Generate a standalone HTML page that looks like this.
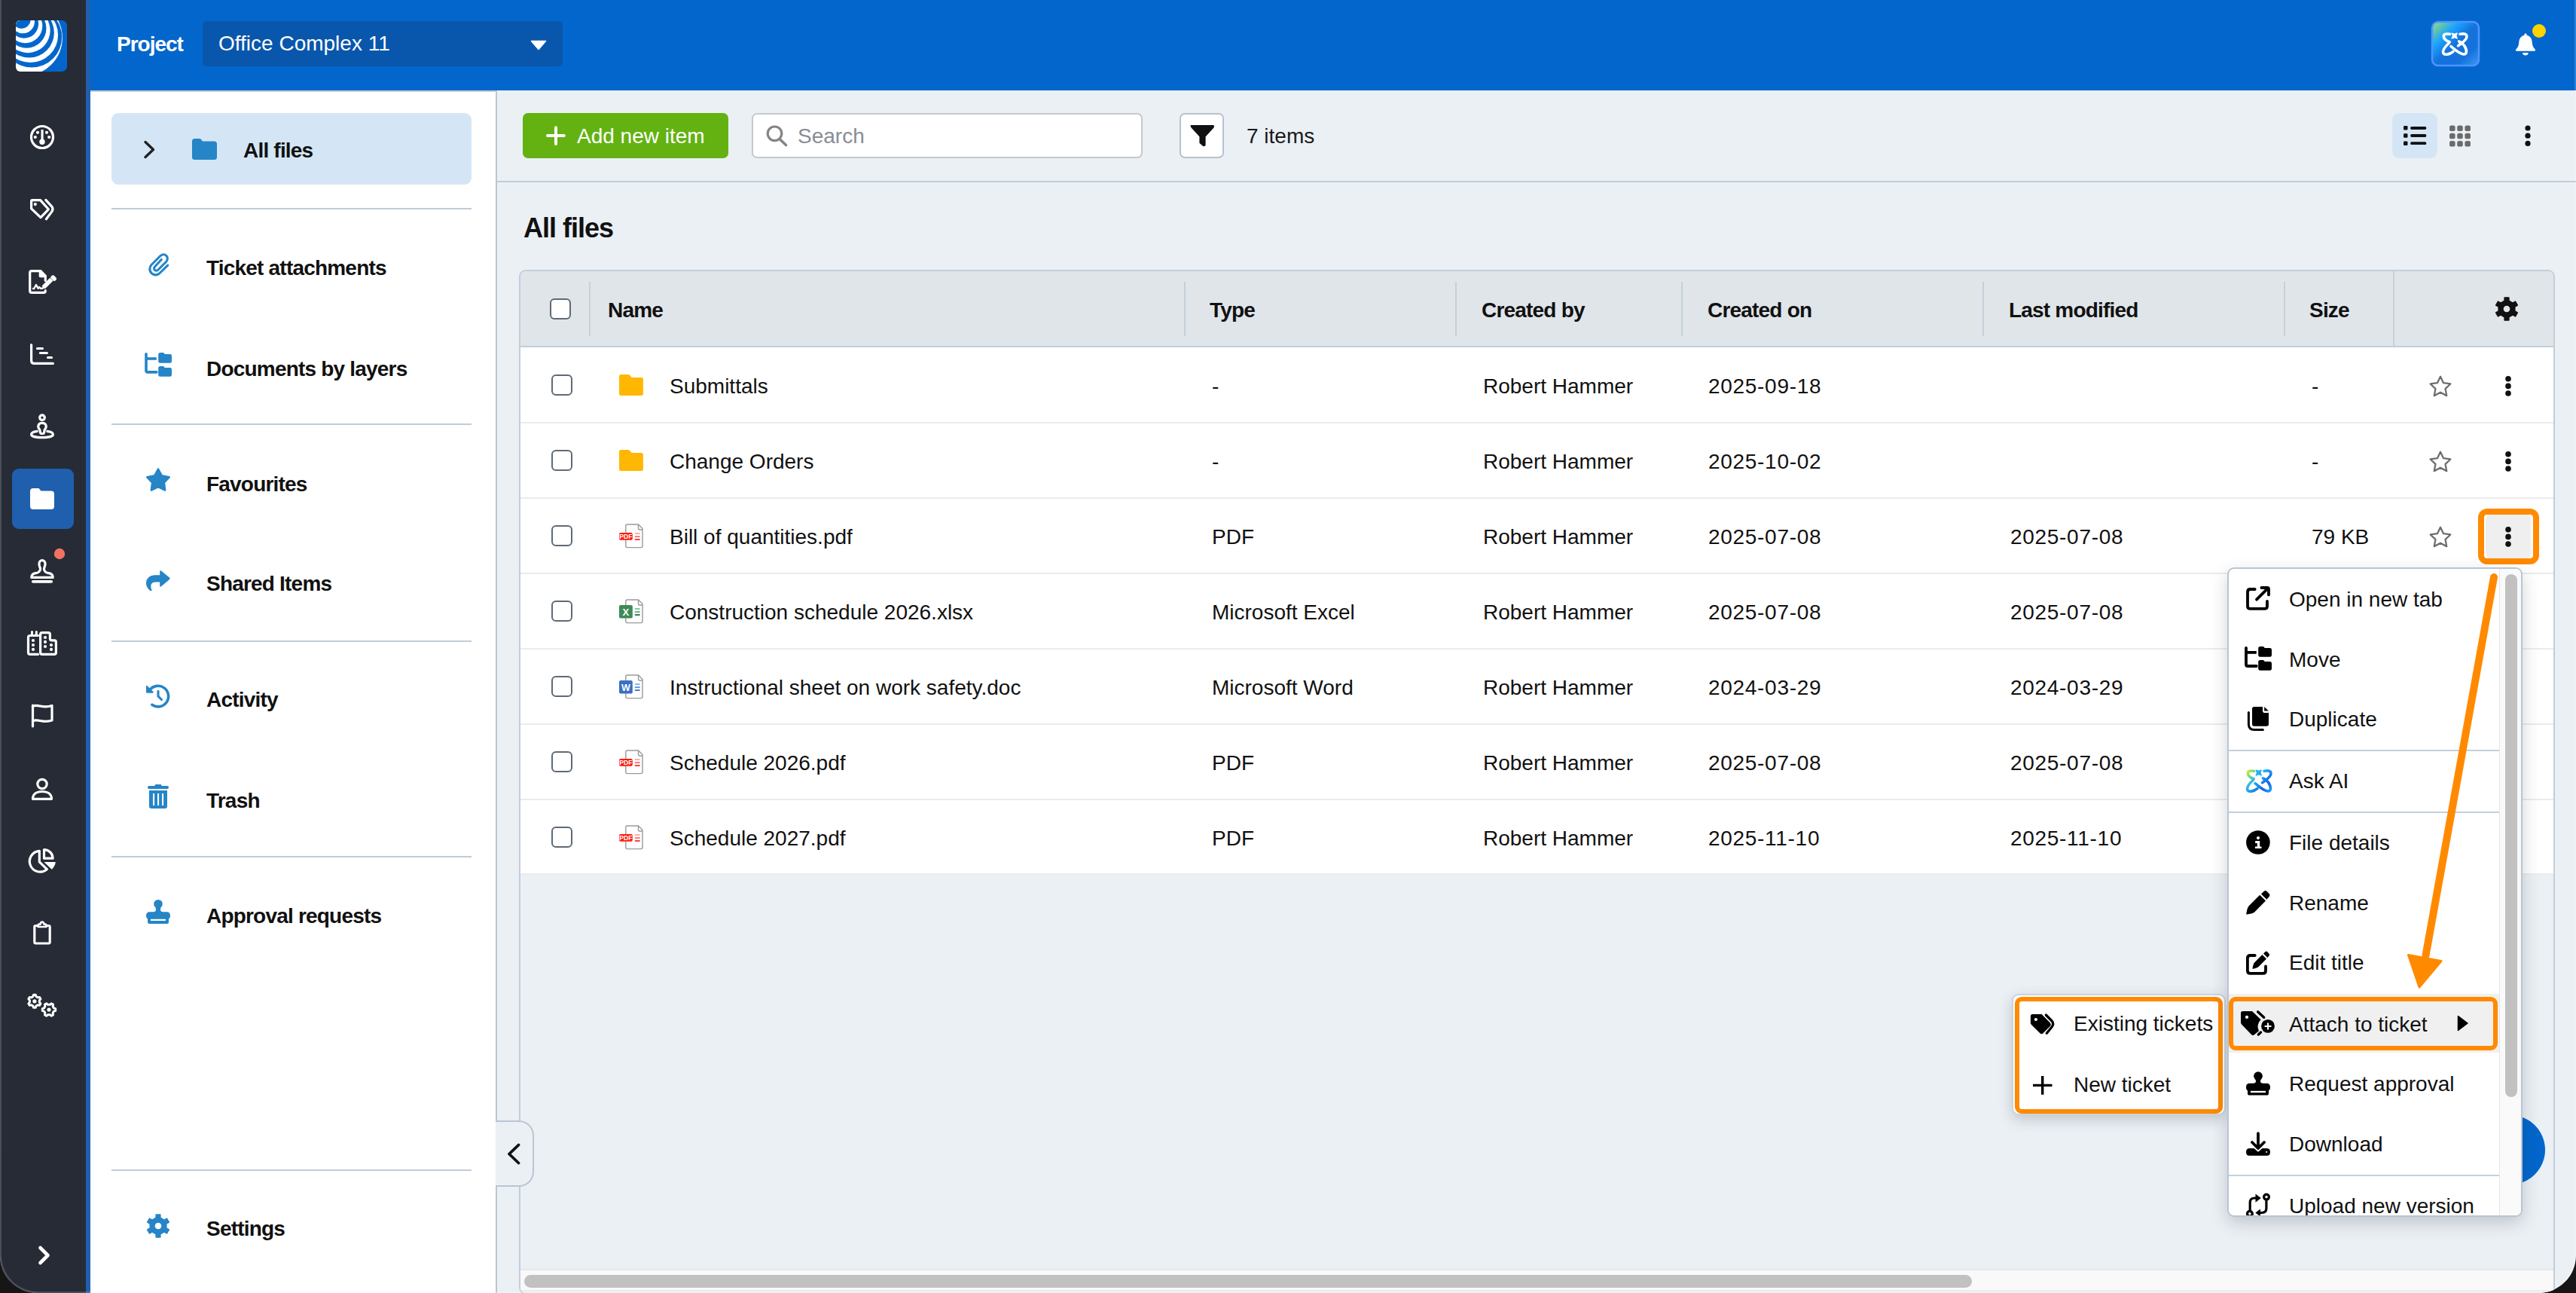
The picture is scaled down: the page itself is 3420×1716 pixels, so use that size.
<!DOCTYPE html>
<html><head><meta charset="utf-8">
<style>
*{box-sizing:border-box;margin:0;padding:0}
html,body{width:3420px;height:1716px;overflow:hidden;background:#161616}
body{font-family:"Liberation Sans",sans-serif;color:#111}
.win{position:absolute;left:0;top:0;width:3420px;height:1716px;border-radius:0 0 50px 50px;overflow:hidden;background:#ebf0f5}
.a{position:absolute}
.t28{position:absolute;font-size:28px;line-height:32px;white-space:nowrap}
.b{font-weight:bold;letter-spacing:-0.8px}
svg{position:absolute;overflow:visible}
.cb{position:absolute;width:28px;height:28px;border:2px solid #5e6a78;border-radius:6px;background:#fff}
</style></head>
<body>
<svg width="0" height="0" style="position:absolute">
 <defs>
  <g id="ic-folder"><path d="M12 13.5 Q12 11 14.5 11 H25 L28.8 15 H41.4 Q43.9 15 43.9 17.5 V36.4 Q43.9 38.9 41.4 38.9 H14.5 Q12 38.9 12 36.4 Z" fill="#ffb703"/></g>
  <g id="ic-page"><path d="M37.5 10 H22.8 Q20.8 10 20.8 12 V38.6 Q20.8 40.6 22.8 40.6 H41 Q43 40.6 43 38.6 V15.5 Z" fill="#fff" stroke="#9a9a9a" stroke-width="1.4" stroke-linejoin="round"/><path d="M37.5 10 V15.2 Q37.5 17 39.3 17 H43" fill="none" stroke="#9a9a9a" stroke-width="1.4"/></g>
  <g id="ic-pdf"><use href="#ic-page"/><rect x="12" y="21.1" width="17.8" height="9.6" rx="2" fill="#ff1a0a"/><text x="20.9" y="29.2" font-family="Liberation Sans" font-weight="bold" font-size="8.6" fill="#fff" text-anchor="middle">PDF</text><path d="M32.9 22 H39.6" stroke="#ff9a9a" stroke-width="1.6"/><path d="M32.9 26.1 H39.6" stroke="#ff5a5a" stroke-width="1.6"/><path d="M32.9 30 H39.6" stroke="#ff1010" stroke-width="1.6"/></g>
  <g id="ic-xls"><use href="#ic-page"/><rect x="12" y="17" width="17.8" height="17.6" rx="2" fill="#3d8b58"/><text x="20.9" y="30.6" font-family="Liberation Sans" font-weight="bold" font-size="13" fill="#fff" text-anchor="middle">X</text><path d="M32.9 22 H39.6" stroke="#5cc08a" stroke-width="1.6"/><path d="M32.9 26.1 H39.6" stroke="#3fa46a" stroke-width="1.6"/><path d="M32.9 30 H39.6" stroke="#1f4d2f" stroke-width="1.6"/></g>
  <g id="ic-doc"><use href="#ic-page"/><rect x="12" y="17" width="17.8" height="17.6" rx="2" fill="#3b6fc4"/><text x="20.9" y="30.6" font-family="Liberation Sans" font-weight="bold" font-size="12.5" fill="#fff" text-anchor="middle">W</text><path d="M32.9 22 H39.6" stroke="#62b2ee" stroke-width="1.6"/><path d="M32.9 26.1 H39.6" stroke="#3f86d6" stroke-width="1.6"/><path d="M32.9 30 H39.6" stroke="#2557c0" stroke-width="1.6"/></g>
  <g id="ic-rowact"><path d="M40.00 13.80 L44.06 22.22 L53.31 23.47 L46.56 29.93 L48.23 39.13 L40.00 34.70 L31.77 39.13 L33.44 29.93 L26.69 23.47 L35.94 22.22 Z" fill="none" stroke="#6e6e6e" stroke-width="2.3" stroke-linejoin="round"/><circle cx="130" cy="16.8" r="3.8" fill="#111"/><circle cx="130" cy="26.4" r="3.8" fill="#111"/><circle cx="130" cy="36" r="3.8" fill="#111"/></g>
 </defs>
</svg>
<div class="win">
  <!-- sidebar -->
  <div class="a" style="left:0;top:0;width:114px;height:1716px;background:#262b36"></div>
  
  <div class="a" style="left:114px;top:0;width:6px;height:1716px;background:#1f5fae"></div>
  <div class="a" style="left:16px;top:622px;width:82px;height:80px;border-radius:9px;background:#1f5fae"></div>
  <svg style="left:0;top:0" width="120" height="1716" viewBox="0 0 120 1716">
   <!-- logo -->
   <defs><clipPath id="lg"><rect x="21" y="27" width="68" height="68" rx="6"/></clipPath></defs>
   <rect x="21" y="27" width="68" height="68" rx="7" fill="#0366cc"/>
   <g clip-path="url(#lg)"><circle cx="32.50" cy="50.20" r="50.40" fill="#fff"/><circle cx="42.10" cy="49.34" r="40.14" fill="#0366cc"/><circle cx="40.41" cy="46.39" r="36.64" fill="#fff"/><circle cx="38.72" cy="43.44" r="33.14" fill="#0366cc"/><circle cx="37.03" cy="40.49" r="29.64" fill="#fff"/><circle cx="35.34" cy="37.54" r="26.14" fill="#0366cc"/><circle cx="33.65" cy="34.59" r="22.64" fill="#fff"/><circle cx="31.96" cy="31.64" r="19.14" fill="#0366cc"/><circle cx="30.27" cy="28.69" r="15.64" fill="#fff"/><circle cx="28.58" cy="25.74" r="12.14" fill="#0366cc"/></g>
   <g fill="none" stroke="#fff" stroke-width="3.2" stroke-linecap="round" stroke-linejoin="round">
    <!-- gauge -->
    <circle cx="56" cy="182" r="14.5"/>
    <!-- tags -->
    <g transform="translate(32,254)">
     <path d="M9.6 13 Q9.6 11.6 11 11.6 H21.6 L32.4 23.8 L22 34.6 L9.6 22.8 Z"/>
     <path d="M28.8 11.4 L37 20.4 Q39 23.5 37 26.6 L29.4 36.8"/>
    </g>
    <!-- signature doc -->
    <g transform="translate(32,350)">
     <path d="M21 9.6 H10 Q7.7 9.6 7.7 12 V36 Q7.7 38.3 10 38.3 H26 Q28.3 38.3 28.3 36 V35.5"/>
     <path d="M28.3 18 V22.5" />
     <path d="M12 33 L13.2 33 L16 28 L18.6 32.8 L20.2 31 L22 32.8 L24.5 32.8" stroke-width="2.4"/>
     <path d="M25.8 31.2 L36.3 20.7" stroke-width="5.8" stroke-linecap="butt"/>
     <path d="M38.3 18.3 L40 20" stroke-width="5.8"/>
    </g>
    <!-- gantt -->
    <g transform="translate(32,446)">
     <path d="M9.6 11.5 V32.5 Q9.6 36.4 13.5 36.4 H38.4"/>
     <path d="M17.5 16.5 H24.5 M21.4 22.5 H30.4 M31.5 28.5 H36.5"/>
    </g>
    <!-- person pin -->
    <g transform="translate(32,542)">
     <circle cx="24" cy="12.2" r="3.3"/>
     <path d="M24 19.4 C28 19.4 29.3 21.5 29.2 24.5 C29 26.5 27.8 27.8 27.2 28.5 L26.5 32.3 Q26.2 33.5 25 33.5 H23 Q21.8 33.5 21.5 32.3 L20.8 28.5 C20.2 27.8 19 26.5 18.8 24.5 C18.7 21.5 20 19.4 24 19.4 Z"/>
     <path d="M17.2 30.4 C12 31 9.6 32.6 9.6 34.7 C9.6 37 16 38.6 24 38.6 C32 38.6 38.4 37 38.4 34.7 C38.4 32.6 36 31 30.8 30.4"/>
    </g>
    <!-- stamp -->
    <g transform="translate(32,734)">
     <path d="M9.8 32.4 H38.2 Q38.2 27.5 33 26.6 L31 26.3 C28 25.6 26.3 23 26.5 20.5 C26.8 19 28 17.5 28 14.5 C28 11.5 26 9.6 24 9.6 C22 9.6 20 11.5 20 14.5 C20 17.5 21.2 19 21.5 20.5 C21.7 23 20 25.6 17 26.3 L15 26.6 Q9.8 27.5 9.8 32.4 Z"/>
     <path d="M11.8 37.8 H36.2" stroke-width="3.8"/>
    </g>
    <!-- buildings -->
    <g transform="translate(32,830)">
     <path d="M18.5 13.5 H8 Q5.5 13.5 5.5 16 V36 Q5.5 38.4 8 38.4 H18.5"/>
     <path d="M10.5 8.6 V13.5 M16.3 8.6 V13.5" stroke-width="3"/>
     <path d="M24 38.3 H40 Q42.4 38.3 42.4 36 V22.2 Q42.4 19.8 40 19.8 H36.8 Q34.4 19.8 34.4 17.4 V12 Q34.4 9.6 32 9.6 H24 Q21.6 9.6 21.6 12 V36 Q21.6 38.3 24 38.3 Z"/>
    </g>
    <!-- flag -->
    <path d="M43.5 936 V964"/>
    <path d="M43.5 937.5 C50 933.5 56 941 69 936.5 V956 C56 960.5 50 953 43.5 957"/>
    <!-- person -->
    <circle cx="56" cy="1040.5" r="6.2"/>
    <path d="M43.5 1060.3 C43.5 1053.5 49 1050.5 56 1050.5 C63 1050.5 68.5 1053.5 68.5 1060.3 Z"/>
    <!-- pie -->
    <g transform="translate(32,1118)">
     <path d="M20.3 11.3 A13.9 13.9 0 1 0 30.4 35.6 L20.3 25.8 Z"/>
     <path d="M26.5 21.2 V9.6 A11.6 11.6 0 0 1 38.1 21.2 Z"/>
    </g>
    <!-- clipboard -->
    <path d="M50 1228.5 H47.5 Q45.8 1228.5 45.8 1230.2 V1250.3 Q45.8 1252 47.5 1252 H64.5 Q66.2 1252 66.2 1250.3 V1230.2 Q66.2 1228.5 64.5 1228.5 H62"/>
    <path d="M50.5 1230 V1228.2 Q50.5 1226.6 52 1226.6 H53.6 Q54 1223.6 56 1223.6 Q58 1223.6 58.4 1226.6 H60 Q61.5 1226.6 61.5 1228.2 V1230 Z" stroke-width="2.6"/>
    <!-- gears -->
    <path stroke-width="3" d="M43.79 1322.54 L44.55 1320.31 L47.25 1320.31 L48.01 1322.54 L50.26 1323.85 L52.58 1323.39 L53.93 1325.72 L52.37 1327.50 L52.37 1330.10 L53.93 1331.88 L52.58 1334.21 L50.26 1333.75 L48.01 1335.06 L47.25 1337.29 L44.55 1337.29 L43.79 1335.06 L41.54 1333.75 L39.22 1334.21 L37.87 1331.88 L39.43 1330.10 L39.43 1327.50 L37.87 1325.72 L39.22 1323.39 L41.54 1323.85 Z"/>
    <path stroke-width="3" d="M71.44 1337.83 L73.69 1338.62 L73.69 1341.38 L71.44 1342.17 L70.10 1344.50 L70.54 1346.84 L68.15 1348.22 L66.34 1346.67 L63.66 1346.67 L61.85 1348.22 L59.46 1346.84 L59.90 1344.50 L58.56 1342.17 L56.31 1341.38 L56.31 1338.62 L58.56 1337.83 L59.90 1335.50 L59.46 1333.16 L61.85 1331.78 L63.66 1333.33 L66.34 1333.33 L68.15 1331.78 L70.54 1333.16 L70.10 1335.50 Z"/>
    <!-- chevron -->
    <path d="M53.5 1656 L63.5 1666 L53.5 1676" stroke-width="4.6"/>
   </g>
   <g fill="#fff">
    <rect x="54.5" y="172" width="3.1" height="16"/>
    <circle cx="56" cy="188.3" r="3.7"/>
    <circle cx="50" cy="175.8" r="2.1"/><circle cx="62" cy="175.8" r="2.1"/>
    <circle cx="46.8" cy="182" r="2.1"/><circle cx="65.2" cy="182" r="2.1"/>
    <circle cx="46.8" cy="271.1" r="2.1"/>
    <path transform="translate(32,350)" d="M19.7 8 H22.6 L29.9 15.4 V18.2 H21.5 Q19.7 18.2 19.7 16.4 Z"/>
    <path transform="translate(32,350)" d="M23.6 33.6 L24.6 29.2 L28 32.6 Z"/>
    <!-- building dots -->
    <g transform="translate(32,830)">
     <circle cx="12" cy="20" r="2.1"/><circle cx="12" cy="26" r="2.1"/><circle cx="12" cy="31.9" r="2.1"/>
     <circle cx="28" cy="16" r="2.1"/><circle cx="28" cy="21.9" r="2.1"/><circle cx="28" cy="28" r="2.1"/>
     <circle cx="36" cy="26" r="2.1"/><circle cx="36" cy="31.9" r="2.1"/>
    </g>
    <path transform="translate(32,1118)" d="M26.4 26 H41.8 A15.4 15.4 0 0 1 36.6 35.8 Z"/>
    <circle cx="45.9" cy="1328.8" r="2.6"/><circle cx="65" cy="1340" r="2.6"/>
    <!-- folder active -->
    <path d="M40 652 Q40 648 44 648 H51.5 L54.5 651.5 H68 Q72 651.5 72 655.5 V672 Q72 676 68 676 H44 Q40 676 40 672 Z"/>
   </g>
   <circle cx="79" cy="735" r="7.2" fill="#f07261"/>
  </svg>

  <!-- header -->
  <div class="a" style="left:120px;top:0;width:3300px;height:120px;background:#0366cc"></div>
  <div class="t28 b" style="left:155px;top:43px;color:#fff;letter-spacing:-1px">Project</div>
  <div class="a" style="left:269px;top:28px;width:478px;height:60px;border-radius:5px;background:#0957ac"></div>
  <div class="t28" style="left:290px;top:42px;color:#fff">Office Complex 11</div>
  <svg style="left:0;top:0" width="3420" height="120" viewBox="0 0 3420 120">
   <path d="M705.5 54.5 H724.5 L715 65.5 Z" fill="#fff" stroke="#fff" stroke-width="1.5" stroke-linejoin="round"/>
   <defs>
    <linearGradient id="aig" x1="0" y1="0" x2="1" y2="1">
     <stop offset="0" stop-color="#9be26f"/>
     <stop offset="0.3" stop-color="#1aa3ff"/>
     <stop offset="0.5" stop-color="#1572dc"/>
     <stop offset="0.75" stop-color="#1572dc"/>
     <stop offset="1" stop-color="#3b9cf5"/>
    </linearGradient>
   </defs>
   <rect x="3229" y="29" width="62" height="58" rx="8" fill="url(#aig)" stroke="#4d94ff" stroke-width="2.5"/>
   <g stroke="#fff" style="--sp:#fff">
   <g id="aiglyph" fill="none" stroke-width="3.6" stroke-linecap="round">
    <path d="M3252.5 45.3 C3248 44.8 3244.5 44.5 3244.3 48 C3244.2 51 3247.5 54 3252.2 55.7"/>
    <path d="M3251.5 57 C3246 62 3242.5 67 3243.8 70.5 C3245.5 73.5 3252 72.5 3257 68.3"/>
    <path d="M3254 61.6 C3259 65.5 3265 71.5 3270.5 72 C3275.5 72.3 3275.5 67 3272 61 C3270.5 58.8 3268.5 57 3267 55.8"/>
    <path d="M3266 45.3 C3270 44.5 3274.5 44.5 3275 48 C3275.5 51 3272 55 3263.6 60.7"/>
    <path d="M3264.5 54.8 L3268 57.8"/>
    <path transform="rotate(45 3258.7 47.5)" d="M3258.7 42.8 L3260.1 46.1 L3263.4 47.5 L3260.1 48.9 L3258.7 52.2 L3257.3 48.9 L3254 47.5 L3257.3 46.1 Z" stroke-width="1.6" stroke-linejoin="round" style="fill:var(--sp);stroke:var(--sp)"/>
   </g>
   </g>
   <!-- bell -->
   <path transform="translate(3330,28)" d="M23 16.3 Q24.6 16.3 24.6 18.5 Q31.5 20.5 31.8 28.5 Q32 34 35.8 37.5 Q36.5 39.8 34.5 39.8 H11.5 Q9.5 39.8 10.2 37.5 Q14 34 14.2 28.5 Q14.5 20.5 21.4 18.5 Q21.4 16.3 23 16.3 Z M19 42 H26.8 Q26.3 45.6 22.9 45.6 Q19.5 45.6 19 42 Z" fill="#fff"/>
   <circle cx="3371" cy="41" r="9" fill="#ffd400"/>
  </svg>
  

  <!-- left panel -->
  <div class="a" style="left:120px;top:120px;width:540px;height:1596px;background:#fff;border-top:2px solid #c8ced4;border-right:2px solid #bac6d2"></div>
  <div class="a" style="left:148px;top:150px;width:478px;height:95px;border-radius:9px;background:#d4e6f5"></div>
  <div class="a" style="left:148px;top:276px;width:478px;height:2px;background:#bfccd9"></div>
  <div class="a" style="left:148px;top:562px;width:478px;height:2px;background:#bfccd9"></div>
  <div class="a" style="left:148px;top:850px;width:478px;height:2px;background:#bfccd9"></div>
  <div class="a" style="left:148px;top:1136px;width:478px;height:2px;background:#bfccd9"></div>
  <div class="a" style="left:148px;top:1552px;width:478px;height:2px;background:#bfccd9"></div>
  <div class="t28 b" style="left:323px;top:184px">All files</div>
  <div class="t28 b" style="left:274px;top:340px">Ticket attachments</div>
  <div class="t28 b" style="left:274px;top:474px">Documents by layers</div>
  <div class="t28 b" style="left:274px;top:627px">Favourites</div>
  <div class="t28 b" style="left:274px;top:759px">Shared Items</div>
  <div class="t28 b" style="left:274px;top:913px">Activity</div>
  <div class="t28 b" style="left:274px;top:1047px">Trash</div>
  <div class="t28 b" style="left:274px;top:1200px">Approval requests</div>
  <div class="t28 b" style="left:274px;top:1615px">Settings</div>
  <svg style="left:0;top:0" width="720" height="1716" viewBox="0 0 720 1716">
   <path d="M193 188.5 L203.5 198.5 L193 208.5" fill="none" stroke="#222" stroke-width="3.4" stroke-linecap="round" stroke-linejoin="round"/>
   <g fill="#2585c7">
    <path d="M255 187.5 Q255 184 258.5 184 H266 L269 187.5 H284.5 Q288 187.5 288 191 V208.5 Q288 212 284.5 212 H258.5 Q255 212 255 208.5 Z"/>
    <!-- docs by layers folders -->
    <g transform="translate(180,454)">
     <path d="M30.2 16.5 Q30.2 14 32.7 14 H37 L38.8 16 H45.8 Q48 16 48 18.2 V25.6 Q48 27.8 45.8 27.8 H32.4 Q30.2 27.8 30.2 25.6 Z"/>
     <path d="M30.2 34.5 Q30.2 32 32.7 32 H37 L38.8 34 H45.8 Q48 34 48 36.2 V43.5 Q48 45.7 45.8 45.7 H32.4 Q30.2 45.7 30.2 43.5 Z"/>
    </g>
    <path d="M210.00 622.50 L214.82 631.37 L224.74 633.21 L217.80 640.53 L219.11 650.54 L210.00 646.20 L200.89 650.54 L202.20 640.53 L195.26 633.21 L205.18 631.37 Z" stroke="#2585c7" stroke-width="2.6" stroke-linejoin="round"/>
    <path transform="translate(180,742)" d="M32.2 21.3 V16.2 Q32.2 14.6 34 15.5 L45 24.6 Q46 25.8 45 27 L34 36.2 Q32.2 37.5 32.2 35.6 V30.6 H26 Q20.3 31 20.3 36 Q20.3 39.5 21.6 41.2 Q21 43 19.5 42 Q14 37.5 14 32 Q14.5 22 25 21.3 Z"/>
    <path transform="translate(180,894)" d="M14 16.8 Q14 15.2 15.5 16.3 L23.5 24 Q24.3 25.7 22.6 25.7 H15.5 Q14 25.7 14 24.2 Z"/>
    <!-- trash -->
    <g transform="translate(180,1027)">
     <rect x="16" y="16" width="28" height="4" rx="2"/>
     <path d="M25 16.5 L26.3 14 H33.7 L35 16.5 Z"/>
     <path d="M18 22 H42 V43 Q42 46 39 46 H21 Q18 46 18 43 Z"/>
    </g>
    <!-- approval stamp -->
    <g transform="translate(180,1180)">
     <circle cx="30" cy="19.7" r="5.8"/>
     <path d="M26.5 23 H33.5 L33 28 Q33.5 30.2 36.5 30.2 H42 Q46 30.5 46 35.5 Q46 38.8 44 39.5 V43.5 Q44 46 41.5 46 H18.5 Q16 46 16 43.5 V39.5 Q14 38.8 14 35.5 Q14 30.5 18 30.2 H23.5 Q26.5 30.2 27 28 Z"/>
    </g>
    <path fill-rule="evenodd" d="M207.10 1616.18 L207.15 1612.07 L212.85 1612.07 L212.90 1616.18 L217.92 1619.08 L221.51 1617.07 L224.35 1622.00 L220.82 1624.10 L220.82 1629.90 L224.35 1632.00 L221.51 1636.93 L217.92 1634.92 L212.90 1637.82 L212.85 1641.93 L207.15 1641.93 L207.10 1637.82 L202.08 1634.92 L198.49 1636.93 L195.65 1632.00 L199.18 1629.90 L199.18 1624.10 L195.65 1622.00 L198.49 1617.07 L202.08 1619.08 Z M215.1 1627 A5.1 5.1 0 1 0 204.9 1627 A5.1 5.1 0 1 0 215.1 1627 Z" stroke="#2585c7" stroke-width="1.5" stroke-linejoin="round"/>
   </g>
   <g fill="none" stroke="#2585c7" stroke-linecap="round" stroke-linejoin="round">
    <path transform="translate(180,320)" stroke-width="3.1" d="M42.7 32.2 L31.5 43 Q26.5 47 21 42.5 Q17 37.5 20.5 32 L33 19.5 Q37.5 16 41 19.5 Q44 23.5 40.5 27.5 L29.5 38.5 Q27 40 25 38 Q24 36 25.5 34 L34.3 24.5"/>
    <g transform="translate(180,454)" stroke-width="3.6">
     <path d="M14 15.8 V38 Q14 39.9 16 39.9 H27.8"/>
     <path d="M14 22 H27.8" stroke-linecap="butt"/>
    </g>
    <g transform="translate(180,894)" stroke-width="3.6">
     <path d="M19 21.5 A13.8 13.8 0 1 1 21.8 41.3"/>
     <path d="M30 23.2 V30 L34.5 34.5" stroke-width="3.1"/>
    </g>
   </g>
   <g fill="#fff">
    <g transform="translate(180,1027)"><rect x="23" y="26" width="2.1" height="16"/><rect x="29" y="26" width="2.1" height="16"/><rect x="35" y="26" width="2.1" height="16"/></g>
    <rect x="200" y="1219.8" width="20" height="2.2"/>
   </g>
  </svg>


  <!-- main -->
  <div class="a" style="left:660px;top:240px;width:2760px;height:2px;background:#bfccd9"></div>
  <div class="a" style="left:694px;top:150px;width:273px;height:60px;border-radius:7px;background:#63b212"></div>
  <div class="t28" style="left:766px;top:165px;color:#fff">Add new item</div>
  <div class="a" style="left:998px;top:150px;width:519px;height:60px;border-radius:7px;background:#fff;border:2px solid #c5c9ce"></div>
  <div class="t28" style="left:1059px;top:165px;color:#878d94">Search</div>
  <div class="a" style="left:1566px;top:150px;width:59px;height:60px;border-radius:7px;background:#fff;border:2px solid #b6c2ce"></div>
  <div class="t28" style="left:1655px;top:165px;color:#1a1a1a">7 items</div>
  <div class="a" style="left:3176px;top:150px;width:60px;height:60px;border-radius:9px;background:#d4e6f5"></div>
  <div class="a" style="left:695px;top:283px;font-size:36px;line-height:40px;font-weight:bold;letter-spacing:-1px;white-space:nowrap">All files</div>
  <svg style="left:0;top:0" width="3420" height="260" viewBox="0 0 3420 260">
   <path d="M738 169.2 V191 M727 180 H748.8" stroke="#fff" stroke-width="4" stroke-linecap="round"/>
   <circle cx="1028.5" cy="177.3" r="9.3" fill="none" stroke="#858585" stroke-width="3.2"/>
   <path d="M1035.5 185 L1043.5 192.5" stroke="#858585" stroke-width="3.6" stroke-linecap="round"/>
   <path d="M1581.5 166.5 H1610.5 Q1612 167 1611 169 L1600 181 V192.5 Q1599 194.5 1597 193 L1593 189.5 V181 L1582 169 Q1580.5 167 1581.5 166.5 Z" fill="#111" stroke="#111" stroke-width="1.2" stroke-linejoin="round"/>
   <g fill="#111">
    <rect x="3191" y="167" width="5.5" height="5.5" rx="1.2"/><rect x="3191" y="177.2" width="5.5" height="5.5" rx="1.2"/><rect x="3191" y="187.5" width="5.5" height="5.5" rx="1.2"/>
   </g>
   <path d="M3202 170 H3219.5 M3202 180 H3219.5 M3202 190.2 H3219.5" stroke="#111" stroke-width="3.8" stroke-linecap="round"/>
   <g fill="#6b6b6b">
    <rect x="3252" y="166.5" width="7.6" height="7.6" rx="2.6"/><rect x="3262.2" y="166.5" width="7.6" height="7.6" rx="2.6"/><rect x="3272.4" y="166.5" width="7.6" height="7.6" rx="2.6"/>
    <rect x="3252" y="176.7" width="7.6" height="7.6" rx="2.6"/><rect x="3262.2" y="176.7" width="7.6" height="7.6" rx="2.6"/><rect x="3272.4" y="176.7" width="7.6" height="7.6" rx="2.6"/>
    <rect x="3252" y="186.9" width="7.6" height="7.6" rx="2.6"/><rect x="3262.2" y="186.9" width="7.6" height="7.6" rx="2.6"/><rect x="3272.4" y="186.9" width="7.6" height="7.6" rx="2.6"/>
   </g>
   <g fill="#111"><circle cx="3356" cy="170" r="3.6"/><circle cx="3356" cy="180.2" r="3.6"/><circle cx="3356" cy="190.4" r="3.6"/></g>
  </svg>
<div class="a" style="left:689px;top:358px;width:2703px;height:1360px;border:2px solid #c2ceda;border-radius:9px;background:#ebf0f5;overflow:hidden">
 <div class="a" style="left:0;top:0;width:2699px;height:101px;background:#e0e5ea;border-bottom:2px solid #c2ceda"></div>
 <div class="a" style="left:0;top:101px;width:2699px;height:700px;background:#fff"></div>
 <div class="a" style="left:0;top:799px;width:2699px;height:2px;background:#ebebeb"></div>
 <div class="a" style="left:0;top:200px;width:2699px;height:2px;background:#ebebeb"></div>
 <div class="a" style="left:0;top:300px;width:2699px;height:2px;background:#ebebeb"></div>
 <div class="a" style="left:0;top:400px;width:2699px;height:2px;background:#ebebeb"></div>
 <div class="a" style="left:0;top:500px;width:2699px;height:2px;background:#ebebeb"></div>
 <div class="a" style="left:0;top:600px;width:2699px;height:2px;background:#ebebeb"></div>
 <div class="a" style="left:0;top:700px;width:2699px;height:2px;background:#ebebeb"></div>
 <div class="a" style="left:0;top:1324px;width:2699px;height:30px;background:#f9f9f9;border-top:2px solid #e6e6e6;border-bottom:2px solid #ececec"></div>
 <div class="a" style="left:5px;top:1332px;width:1922px;height:17px;border-radius:9px;background:#c1c1c1"></div>
 <div class="a" style="left:91px;top:14px;width:2px;height:72px;background:#c6d0da"></div>
 <div class="a" style="left:881px;top:14px;width:2px;height:72px;background:#c6d0da"></div>
 <div class="a" style="left:1241px;top:14px;width:2px;height:72px;background:#c6d0da"></div>
 <div class="a" style="left:1541px;top:14px;width:2px;height:72px;background:#c6d0da"></div>
 <div class="a" style="left:1941px;top:14px;width:2px;height:72px;background:#c6d0da"></div>
 <div class="a" style="left:2341px;top:14px;width:2px;height:72px;background:#c6d0da"></div>
 <div class="a" style="left:2486px;top:0;width:2px;height:101px;background:#c6d0da"></div>
</div>
<div class="a cb" style="left:730px;top:396px"></div>
<div class="t28 b" style="left:807px;top:396px">Name</div>
<div class="t28 b" style="left:1606px;top:396px">Type</div>
<div class="t28 b" style="left:1967px;top:396px">Created by</div>
<div class="t28 b" style="left:2267px;top:396px">Created on</div>
<div class="t28 b" style="left:2667px;top:396px">Last modified</div>
<div class="t28 b" style="left:3066px;top:396px">Size</div>
<div class="a cb" style="left:732px;top:497px"></div>
<svg style="left:810px;top:486px" width="56" height="50" viewBox="0 0 56 50"><use href="#ic-folder"/></svg>
<div class="t28" style="left:889px;top:497px">Submittals</div>
<div class="t28" style="left:1609px;top:497px">-</div>
<div class="t28" style="left:1969px;top:497px">Robert Hammer</div>
<div class="t28" style="left:2268px;top:497px;letter-spacing:0.7px">2025-09-18</div>
<div class="t28" style="left:3069px;top:497px">-</div>
<svg style="left:3200px;top:486px" width="160" height="50" viewBox="0 0 160 50"><use href="#ic-rowact"/></svg>
<div class="a cb" style="left:732px;top:597px"></div>
<svg style="left:810px;top:586px" width="56" height="50" viewBox="0 0 56 50"><use href="#ic-folder"/></svg>
<div class="t28" style="left:889px;top:597px">Change Orders</div>
<div class="t28" style="left:1609px;top:597px">-</div>
<div class="t28" style="left:1969px;top:597px">Robert Hammer</div>
<div class="t28" style="left:2268px;top:597px;letter-spacing:0.7px">2025-10-02</div>
<div class="t28" style="left:3069px;top:597px">-</div>
<svg style="left:3200px;top:586px" width="160" height="50" viewBox="0 0 160 50"><use href="#ic-rowact"/></svg>
<div class="a cb" style="left:732px;top:697px"></div>
<svg style="left:810px;top:686px" width="56" height="50" viewBox="0 0 56 50"><use href="#ic-pdf"/></svg>
<div class="t28" style="left:889px;top:697px">Bill of quantities.pdf</div>
<div class="t28" style="left:1609px;top:697px">PDF</div>
<div class="t28" style="left:1969px;top:697px">Robert Hammer</div>
<div class="t28" style="left:2268px;top:697px;letter-spacing:0.7px">2025-07-08</div>
<div class="t28" style="left:2669px;top:697px;letter-spacing:0.7px">2025-07-08</div>
<div class="t28" style="left:3069px;top:697px">79 KB</div>
<svg style="left:3200px;top:686px" width="160" height="50" viewBox="0 0 160 50"><use href="#ic-rowact"/></svg>
<div class="a cb" style="left:732px;top:797px"></div>
<svg style="left:810px;top:786px" width="56" height="50" viewBox="0 0 56 50"><use href="#ic-xls"/></svg>
<div class="t28" style="left:889px;top:797px">Construction schedule 2026.xlsx</div>
<div class="t28" style="left:1609px;top:797px">Microsoft Excel</div>
<div class="t28" style="left:1969px;top:797px">Robert Hammer</div>
<div class="t28" style="left:2268px;top:797px;letter-spacing:0.7px">2025-07-08</div>
<div class="t28" style="left:2669px;top:797px;letter-spacing:0.7px">2025-07-08</div>
<div class="a cb" style="left:732px;top:897px"></div>
<svg style="left:810px;top:886px" width="56" height="50" viewBox="0 0 56 50"><use href="#ic-doc"/></svg>
<div class="t28" style="left:889px;top:897px">Instructional sheet on work safety.doc</div>
<div class="t28" style="left:1609px;top:897px">Microsoft Word</div>
<div class="t28" style="left:1969px;top:897px">Robert Hammer</div>
<div class="t28" style="left:2268px;top:897px;letter-spacing:0.7px">2024-03-29</div>
<div class="t28" style="left:2669px;top:897px;letter-spacing:0.7px">2024-03-29</div>
<div class="a cb" style="left:732px;top:997px"></div>
<svg style="left:810px;top:986px" width="56" height="50" viewBox="0 0 56 50"><use href="#ic-pdf"/></svg>
<div class="t28" style="left:889px;top:997px">Schedule 2026.pdf</div>
<div class="t28" style="left:1609px;top:997px">PDF</div>
<div class="t28" style="left:1969px;top:997px">Robert Hammer</div>
<div class="t28" style="left:2268px;top:997px;letter-spacing:0.7px">2025-07-08</div>
<div class="t28" style="left:2669px;top:997px;letter-spacing:0.7px">2025-07-08</div>
<div class="a cb" style="left:732px;top:1097px"></div>
<svg style="left:810px;top:1086px" width="56" height="50" viewBox="0 0 56 50"><use href="#ic-pdf"/></svg>
<div class="t28" style="left:889px;top:1097px">Schedule 2027.pdf</div>
<div class="t28" style="left:1609px;top:1097px">PDF</div>
<div class="t28" style="left:1969px;top:1097px">Robert Hammer</div>
<div class="t28" style="left:2268px;top:1097px;letter-spacing:0.7px">2025-11-10</div>
<div class="t28" style="left:2669px;top:1097px;letter-spacing:0.7px">2025-11-10</div>
<svg style="left:0;top:0" width="3420" height="500" viewBox="0 0 3420 500"><path fill="#111" fill-rule="evenodd" stroke="#111" stroke-width="1.5" stroke-linejoin="round" d="M3325.10 399.18 L3325.15 395.07 L3330.85 395.07 L3330.90 399.18 L3335.92 402.08 L3339.51 400.07 L3342.35 405.00 L3338.82 407.10 L3338.82 412.90 L3342.35 415.00 L3339.51 419.93 L3335.92 417.92 L3330.90 420.82 L3330.85 424.93 L3325.15 424.93 L3325.10 420.82 L3320.08 417.92 L3316.49 419.93 L3313.65 415.00 L3317.18 412.90 L3317.18 407.10 L3313.65 405.00 L3316.49 400.07 L3320.08 402.08 Z M3333.1 410 A5.1 5.1 0 1 0 3322.9 410 A5.1 5.1 0 1 0 3333.1 410 Z"/></svg>
  <!-- collapse tab -->
  <div class="a" style="left:658px;top:1487px;width:51px;height:88px;background:#ebf0f5;border:2px solid #bac6d2;border-left:none;border-radius:0 20px 20px 0"></div>
  <svg style="left:0;top:0" width="720" height="1716" viewBox="0 0 720 1716">
   <path d="M688.5 1519.5 L676 1531.5 L688.5 1543.5" fill="none" stroke="#111" stroke-width="3.8" stroke-linecap="round" stroke-linejoin="round"/>
  </svg>
  <!-- FAB -->
  <div class="a" style="left:3287px;top:1480px;width:92px;height:92px;border-radius:50%;background:#0366cc"></div>
  <!-- kebab highlight -->
  <div class="a" style="left:3300px;top:682px;width:60px;height:60px;border-radius:8px;background:#efefef"></div>
  <svg style="left:0;top:0" width="3420" height="800" viewBox="0 0 3420 800"><g fill="#111"><circle cx="3330" cy="702.8" r="3.8"/><circle cx="3330" cy="712.4" r="3.8"/><circle cx="3330" cy="722" r="3.8"/></g></svg>
  <div class="a" style="left:3290px;top:675px;width:81px;height:74px;border-radius:12px;border:8px solid #ff8a00"></div>
  <!-- submenu -->
  <div class="a" style="left:2671px;top:1319px;width:284px;height:161px;border-radius:9px;background:#fff;border:2px solid #c8d4e0;box-shadow:0 6px 18px rgba(40,50,60,.22)"></div>
  <div class="a" style="left:2675px;top:1323px;width:276px;height:155px;border-radius:9px;border:6.5px solid #ff8a00"></div>
  <div class="t28" style="left:2753px;top:1343px">Existing tickets</div>
  <div class="t28" style="left:2753px;top:1424px">New ticket</div>
  <!-- main menu -->
  <div class="a" style="left:2957px;top:753px;width:392px;height:862px;border-radius:9px;background:#fff;border:2px solid #b8c6d4;box-shadow:0 8px 22px rgba(40,50,60,.22);overflow:hidden">
   <div class="a" style="left:359px;top:0;width:31px;height:859px;background:#fafafa;border-left:1px solid #e6e6e6"></div>
   <div class="a" style="left:367px;top:7px;width:16px;height:694px;border-radius:8px;background:#c1c1c1"></div>
   <div class="a" style="left:0;top:564px;width:359px;height:78px;background:#f0f0f0"></div>
   <div class="a" style="left:0;top:239.5px;width:359px;height:2px;background:#c4d0dc"></div>
   <div class="a" style="left:0;top:321.5px;width:359px;height:2px;background:#c4d0dc"></div>
   <div class="a" style="left:0;top:803.5px;width:359px;height:2px;background:#c4d0dc"></div>
   <div class="t28" style="left:80px;top:25px">Open in new tab</div>
   <div class="t28" style="left:80px;top:105px">Move</div>
   <div class="t28" style="left:80px;top:184px">Duplicate</div>
   <div class="t28" style="left:80px;top:266px">Ask AI</div>
   <div class="t28" style="left:80px;top:348px">File details</div>
   <div class="t28" style="left:80px;top:428px">Rename</div>
   <div class="t28" style="left:80px;top:507px">Edit title</div>
   <div class="t28" style="left:80px;top:589px">Attach to ticket</div>
   <div class="t28" style="left:80px;top:668px">Request approval</div>
   <div class="t28" style="left:80px;top:748px">Download</div>
   <div class="t28" style="left:80px;top:830px">Upload new version</div>
   <svg style="left:-2959px;top:-755px" width="3420" height="1716" viewBox="0 0 3420 1716">
    <defs>
     <linearGradient id="aig2" gradientUnits="userSpaceOnUse" x1="3244" y1="44" x2="3276" y2="74">
      <stop offset="0" stop-color="#c8f22a"/><stop offset="0.38" stop-color="#22b2f2"/><stop offset="0.72" stop-color="#1464e4"/><stop offset="1" stop-color="#1eaaff"/>
     </linearGradient>
    </defs>
    <g fill="none" stroke="#000" stroke-width="3.8" stroke-linecap="round" stroke-linejoin="round">
     <g transform="translate(2970,766)"><path d="M23.7 16 H17.5 Q14 16 14 19.5 V38.4 Q14 41.9 17.5 41.9 H36.5 Q40 41.9 40 38.4 V32"/><path d="M26 29.7 L40 15.7 M32.4 14 H40.2 Q42 14 42 15.8 V23.4"/></g>
     <g transform="translate(2970,846)"><path d="M12 14 V36 Q12 38 14 38 H25.8"/><path d="M12 19.9 H25.8" stroke-linecap="butt"/></g>
     <g transform="translate(2970,926)"><path d="M15.4 19.4 V35 Q15.4 42.6 23 42.6 H34.4" stroke-width="3"/></g>
     <g transform="translate(2970,1248)"><path d="M23.7 20 H17.5 Q13.9 20 13.9 23.6 V40.3 Q13.9 43.9 17.5 43.9 H34.4 Q38 43.9 38 40.3 V34.3"/></g>
     <g transform="translate(2970,1490)"><path d="M28 14.2 V33 M20 26 L28 34 L36 26"/></g>
     <g transform="translate(2970,1570)" stroke-width="3.2"><circle cx="16.9" cy="40.7" r="3.4"/><circle cx="39" cy="18.6" r="3.4"/><path d="M17.2 37.2 V26 Q17.2 20 23.2 20 H26"/><path d="M38.9 22 V33.5 Q38.9 39.5 32.9 39.5 H30"/></g>
    </g>
    <g fill="#000">
     <g transform="translate(2970,846)"><path d="M28.2 14.5 Q28.2 12 30.7 12 H35 L36.8 14 H43.6 Q46 14 46 16.4 V23.4 Q46 25.8 43.6 25.8 H30.6 Q28.2 25.8 28.2 23.4 Z"/><path d="M28.2 32.5 Q28.2 30 30.7 30 H35 L36.8 32 H43.6 Q46 32 46 34.4 V41.4 Q46 43.8 43.6 43.8 H30.6 Q28.2 43.8 28.2 41.4 Z"/></g>
     <g transform="translate(2970,926)"><path d="M22.8 12 H34 V17.2 Q34 20 36.8 20 H42 V35 Q42 37.8 39.2 37.8 H22.8 Q20 37.8 20 35 V14.8 Q20 12 22.8 12 Z"/><path d="M36.2 12 L41.8 17.6 H36.2 Z"/></g>
     <g transform="translate(2970,1088)"><circle cx="27.9" cy="30" r="15.8"/></g>
     <g transform="translate(2970,1168)"><path d="M30.2 19.8 L38 27.4 L23.2 42.4 Q21 44.3 17.5 44.8 L13.3 45.6 Q12 45.8 12.3 44.5 L13.2 40 Q13.8 36.6 15.5 34.5 Z"/><path d="M32 18.4 L35.8 14.8 Q37.6 13.3 39.4 14.8 L42.8 18.2 Q44.3 20 42.8 21.8 L39.4 25.8 Z"/></g>
     <g transform="translate(2970,1248)"><path d="M33.4 19 L39 24.5 L28 35.6 Q26.5 36.5 24.5 37 L21.3 37.8 Q20.2 38 20.5 37 L21.2 34 Q21.6 31.5 22.6 30 Z"/><path d="M35 17.6 L37.6 15.1 Q38.8 14 40 15.1 L42.6 17.7 Q43.7 19 42.6 20.2 L40.4 23 Z"/></g>
     <g transform="translate(2966,1328)"><path d="M11.5 14 H24 L35.7 25.3 A12 12 0 0 0 33 40.3 L26.5 45.5 Q24.7 46.6 23 45 L10 31.5 Q9 30.3 9 28.5 V16.5 Q9 14 11.5 14 Z"/><path d="M31.6 14.8 L39.7 22.3" stroke="#000" stroke-width="3.4" stroke-linecap="round"/><path d="M32.3 45 L35.5 42" stroke="#000" stroke-width="3.4" stroke-linecap="round"/><circle cx="45" cy="33.9" r="8.9"/></g>
     <g transform="translate(2970,1410)"><circle cx="28" cy="18.1" r="5.9"/><path d="M24.5 21 H31.5 L31 25.7 Q31.5 27.8 34.5 27.8 H40 Q44 28 44 33 Q44 36.5 42 37.2 V41 Q42 43.6 39.4 43.6 H16.6 Q14 43.6 14 41 V37.2 Q12 36.5 12 33 Q12 28 16 27.8 H21.5 Q24.5 27.8 25 25.7 Z"/></g>
     <g transform="translate(2970,1490)"><path d="M16.5 34 H22.5 L28 38.8 L33.5 34 H39.5 Q44 34 44 38.9 Q44 43.8 39.5 43.8 H16.5 Q12 43.8 12 38.9 Q12 34 16.5 34 Z"/></g>
     <g transform="translate(2970,1570)"><path d="M24.5 14.5 L31.8 20 L24.5 25.8 Z"/><path d="M31 34.5 L24.3 39.6 L31 44.5 Z"/></g>
     <path d="M3263.5 1348.5 L3276 1358 L3263.5 1367.5 Z" stroke="#000" stroke-width="1.5" stroke-linejoin="round"/>
    </g>
    <g fill="#fff">
     <g transform="translate(2970,1088)"><circle cx="28" cy="24.1" r="2.1"/><path d="M24.6 28 H30.2 V35.6 H32 Q32.6 35.6 32.6 36.8 Q32.6 38 32 38 H24.4 Q23.8 38 23.8 36.8 Q23.8 35.6 24.4 35.6 H26.8 V31 H24.6 Q24 31 24 29.5 Q24 28 24.6 28 Z"/></g>
     <g transform="translate(2966,1328)"><circle cx="17" cy="21.9" r="2.1"/><path d="M45 29.5 V38.5 M40.6 34 H49.5" stroke="#fff" stroke-width="2.1"/></g>
     <g transform="translate(2970,1410)"><rect x="17.9" y="37.8" width="20.1" height="2.3"/></g>
     <g transform="translate(2970,1490)"><rect x="38.2" y="37.9" width="1.8" height="1.8" transform="rotate(20 39 38.8)"/></g>
    </g>
    <!-- ask ai -->
    <use href="#aiglyph" transform="translate(-260,978)" stroke="url(#aig2)" style="--sp:#22b0ee"/>
   </svg>
  </div>
  <div class="a" style="left:2959px;top:1323px;width:357px;height:71px;border-radius:9px;border:6px solid #ff8a00"></div>
  <!-- submenu icons -->
  <svg style="left:0;top:0" width="3420" height="1716" viewBox="0 0 3420 1716">
   <g transform="translate(2682,1330)">
    <path d="M16.5 16 H28.5 L40 27.4 Q41.6 29.7 40 31.8 L30.5 41.3 Q28.5 43.3 26.4 41.3 L15 30 Q13.9 28.8 13.9 27.2 V18.6 Q13.9 16 16.5 16 Z" fill="#000"/>
    <circle cx="20.9" cy="23" r="2.1" fill="#fff"/>
    <path d="M34.3 17 L42.2 25 Q45.2 28.8 42.2 32.8 L35.3 41.3" fill="none" stroke="#000" stroke-width="3.3" stroke-linecap="round" stroke-linejoin="round"/>
   </g>
   <path d="M2711.7 1428 V1452.8 M2699 1440.4 H2724.5" stroke="#000" stroke-width="3.4"/>
   <!-- arrow -->
   <path d="M3311 766 L3220.5 1268" stroke="#ff8a00" stroke-width="10" stroke-linecap="round"/>
   <path d="M3212 1310 L3197.5 1267.5 L3241 1275.5 Z" fill="#ff8a00" stroke="#ff8a00" stroke-width="3" stroke-linejoin="round"/>
  </svg>

  <div class="a" style="left:0;top:0;width:3420px;height:1716px;border:2px solid rgba(255,255,255,.17);border-top:none;border-radius:0 0 50px 50px"></div>
</div>
<script>(function(){var w=window.innerWidth||3420;var k=w/3420;if(Math.abs(k-1)>0.002){var e=document.querySelector(".win");e.style.transformOrigin="0 0";e.style.transform="scale("+k+")";document.documentElement.style.width=w+"px";document.body.style.width=w+"px";document.documentElement.style.height=(1716*k)+"px";document.body.style.height=(1716*k)+"px";}})();</script>
</body></html>
